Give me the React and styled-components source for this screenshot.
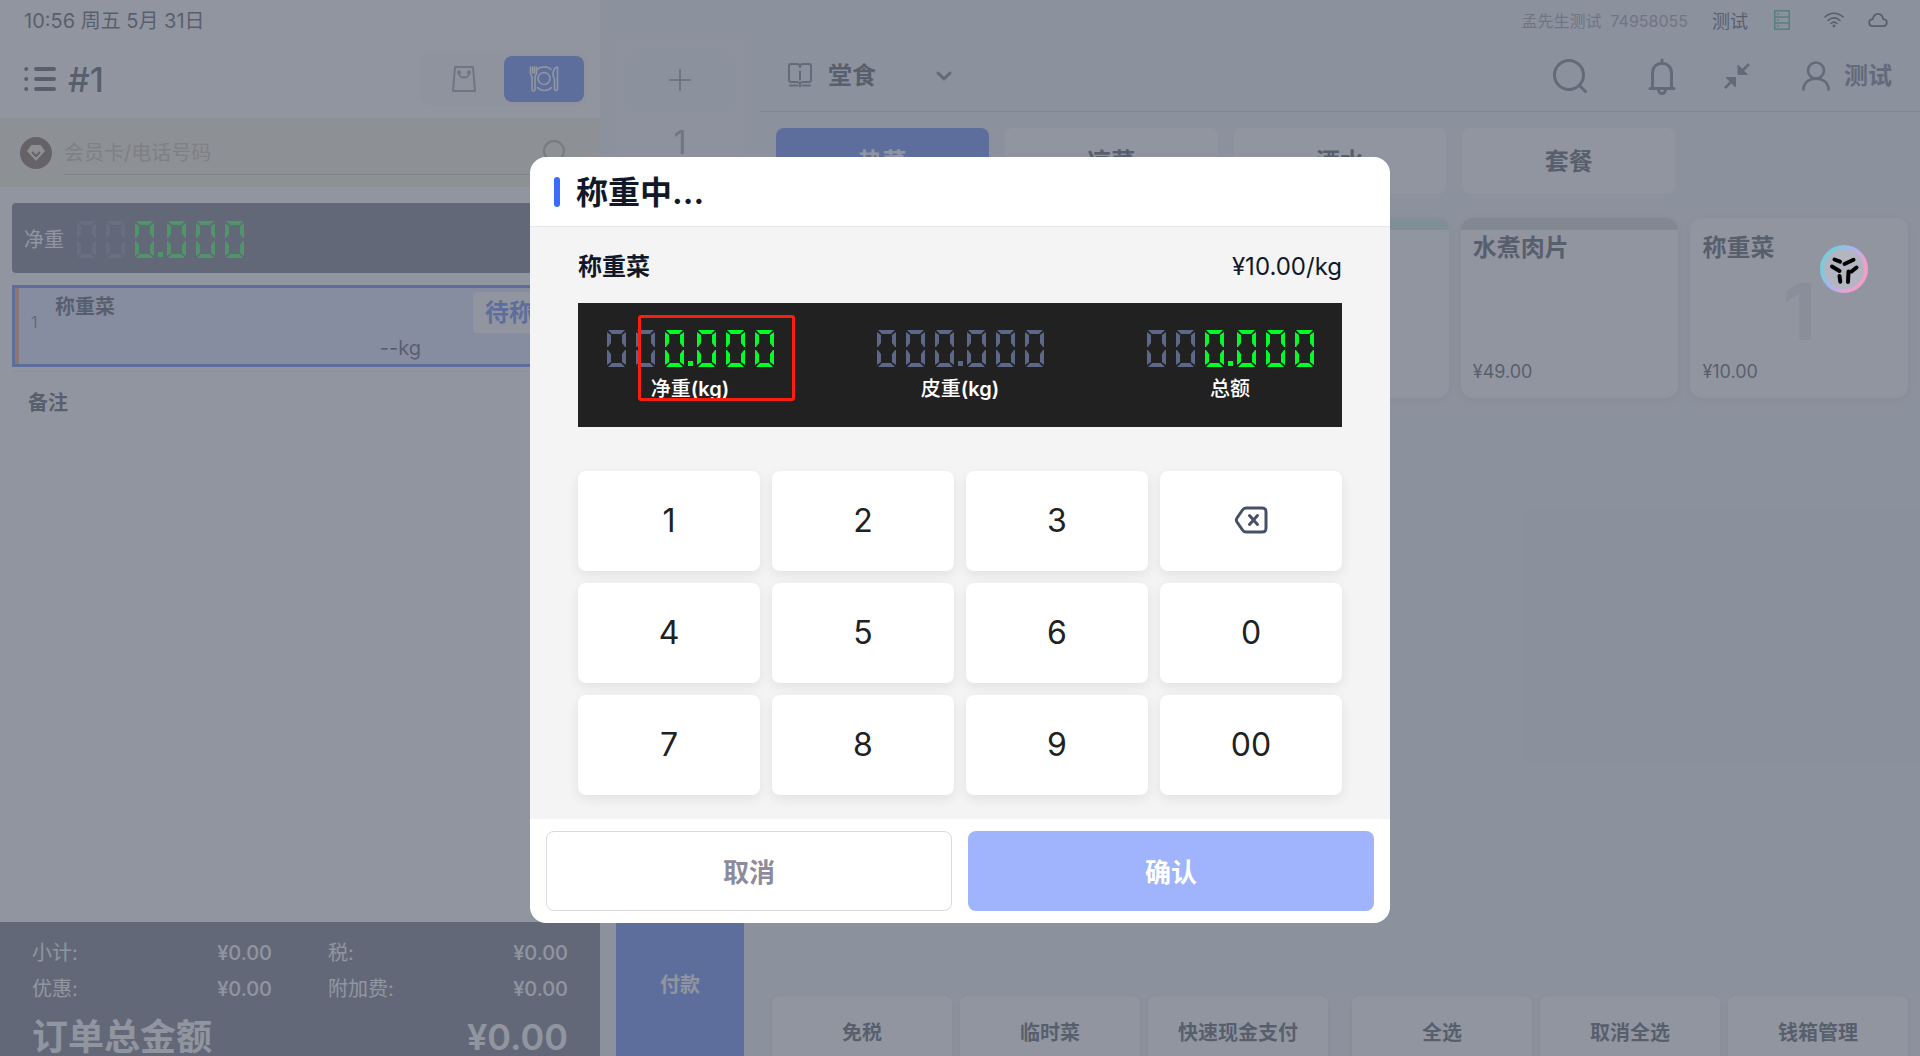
import React, { useState } from 'react';
import styled, { createGlobalStyle } from 'styled-components';

const GlobalStyle = createGlobalStyle`
  * {
    box-sizing: border-box;
  }

  body {
    margin: 0;
    overflow: hidden;
    font-family: Inter, 'Noto Sans CJK SC', sans-serif;
    color: #1f2937;
  }

  button, input, select {
    font-family: inherit;
    color: inherit;
    border: none;
    background: none;
    padding: 0;
    margin: 0;
    outline: none;
  }
`;

const Viewport = styled.div`
  height: 100vh;
  overflow: hidden;
`;

// the till screen runs a little taller than the window
const Screen = styled.div`
  position: relative;
  height: calc(100vh + 24px);
  display: grid;
  grid-template-columns: 600fr 1320fr;
  background: #ecedf1;
`;

const OrderPanel = styled.aside`
  display: flex;
  flex-direction: column;
  background: #fff;
`;

const Clock = styled.div`
  height: 40px;
  padding: 0 24px;
  font-size: 20px;
  line-height: 42px;
`;

const OrderHeader = styled.div`
  display: flex;
  align-items: center;
  gap: 12px;
  height: 78px;
  padding: 0 12px 0 24px;
`;

const OrderNumber = styled.h1`
  flex: 1;
  margin: 0;
  font-size: 34px;
  font-weight: 500;
`;

const Toggle = styled.div`
  display: flex;
  padding: 4px;
  border-radius: 12px;
  background: #f6f6f8;
`;

const ToggleButton = styled.button`
  display: flex;
  align-items: center;
  justify-content: center;
  width: 80px;
  height: 46px;
  border-radius: 8px;
  color: ${(props) => (props.$active ? '#fff' : '#7c8094')};
  background: ${(props) => (props.$active ? '#3565ee' : 'transparent')};
`;

const MemberBar = styled.div`
  display: flex;
  align-items: center;
  gap: 12px;
  height: 69px;
  padding: 0 24px 0 20px;
  background: #f2ead2;
`;

const MemberField = styled.label`
  flex: 1;
  display: flex;
  align-items: center;
  height: 44px;
  padding-right: 10px;
  border-bottom: 1px solid #cdb796;
  color: #ab9676;
`;

const MemberInput = styled.input`
  flex: 1;
  height: 42px;
  padding-top: 2px;
  font-size: 20px;

  &::placeholder {
    color: #bda98e;
    opacity: 1;
  }
`;

const OrderBody = styled.div`
  flex: 1;
  padding: 16px 12px;
`;

const WeightStrip = styled.div`
  display: flex;
  align-items: center;
  gap: 12px;
  height: 70px;
  padding: 0 12px;
  border-radius: 4px;
  background: #484e5c;
  color: #fff;
  font-size: 20px;
`;

const OrderLine = styled.div`
  display: flex;
  height: 82px;
  margin-top: 12px;
  border: 3px solid #3565ee;
  background: #d9deff;
`;

const LineMark = styled.span`
  width: 4px;
  background: #f08048;
`;

const LineIndex = styled.span`
  width: 36px;
  padding-left: 12px;
  font-size: 16px;
  line-height: 68px;
  color: #4b5563;
`;

const LineName = styled.span`
  flex: 1;
  font-size: 20px;
  font-weight: 700;
  line-height: 38px;
`;

const LineWeight = styled.span`
  align-self: flex-end;
  font-size: 20px;
  line-height: 32px;
  margin-right: 52px;
`;

const Pending = styled.span`
  height: 41px;
  margin: 4px 16px 4px 0;
  padding: 0 12px;
  border-radius: 4px;
  background: #fff;
  color: #3565ee;
  font-size: 24px;
  font-weight: 700;
  line-height: 41px;
`;

const Remark = styled.div`
  margin-top: 4px;
  padding: 0 16px;
  border-top: 1px solid #e5e7eb;
  font-size: 20px;
  font-weight: 700;
  line-height: 62px;
`;

const Summary = styled.div`
  height: 158px;
  padding: 16px 32px;
  background: #484e5c;
  color: #fff;
`;

const SummaryGrid = styled.div`
  display: grid;
  grid-template-columns: 1fr 1fr;
  gap: 6px 56px;
  font-size: 20px;
  line-height: 30px;
`;

const SummaryRow = styled.div`
  display: flex;
  justify-content: space-between;

  span:last-child {
    font-weight: 500;
  }
`;

const TotalRow = styled.div`
  display: flex;
  justify-content: space-between;
  margin-top: 14px;
  font-size: 36px;
  font-weight: 600;
  line-height: 38px;

  span:first-child {
    font-weight: 700;
  }
`;

const Workspace = styled.main`
  display: flex;
  flex-direction: column;
  min-width: 0;
`;

const StatusBar = styled.div`
  display: flex;
  align-items: center;
  justify-content: flex-end;
  height: 40px;
  padding-right: 32px;
  font-size: 18px;
`;

const ShopInfo = styled.span`
  margin-right: 24px;
  font-size: 16px;
  color: #7c8094;
  white-space: pre;
`;

const StatusIcons = styled.span`
  display: flex;
  align-items: center;
  margin-left: 26px;

  svg + svg {
    margin-left: 24px;
  }

  svg:nth-child(2) {
    margin-left: 34px;
  }
`;

const Columns = styled.div`
  flex: 1;
  display: flex;
  gap: 16px;
  min-height: 0;
  padding-left: 16px;
`;

const TicketRail = styled.nav`
  display: flex;
  flex-direction: column;
  width: 128px;
`;

const TicketList = styled.div`
  flex: 1;
  display: flex;
  flex-direction: column;
  padding: 8px;
  border-radius: 8px;
  background: #f4f4f7;
`;

const AddTicket = styled.button`
  display: flex;
  align-items: center;
  justify-content: center;
  height: 64px;
  border-radius: 8px;
  background: #ecedf1;
  color: #7c8094;
`;

const Ticket = styled.button`
  height: 60px;
  font-size: 32px;
  color: #7c8094;
`;

const PayButton = styled.button`
  height: 194px;
  background: #3565ee;
  color: #fff;
  font-size: 20px;
  font-weight: 700;
`;

const Menu = styled.div`
  flex: 1;
  display: flex;
  flex-direction: column;
  min-width: 0;
`;

const MenuHeader = styled.div`
  display: flex;
  align-items: center;
  height: 72px;
  padding: 0 28px;
  border-bottom: 1px solid #c8cad2;
`;

const ModePicker = styled.label`
  flex: 1;
  display: flex;
  align-items: center;
  gap: 16px;
  color: #4b5568;
`;

const ModeSelect = styled.select`
  appearance: none;
  width: 108px;
  margin-right: -16px;
  font-size: 24px;
  font-weight: 700;
  color: #1f2937;
`;

const IconButton = styled.button`
  display: flex;
  align-items: center;
  justify-content: center;
  gap: 14px;
  margin-left: ${(props) => props.$gap}px;
  color: #4b5568;
  font-size: 24px;
  line-height: 32px;
  font-weight: 700;
`;

const Categories = styled.div`
  display: grid;
  grid-template-columns: repeat(5, 1fr);
  gap: 16px;
  padding: 16px 16px 0;
`;

const Category = styled.button`
  height: 66px;
  padding-bottom: 4px;
  border-radius: 8px;
  font-size: 24px;
  font-weight: 700;
  background: ${(props) => (props.$active ? '#3565ee' : '#fff')};
  color: ${(props) => (props.$active ? '#fff' : '#1f2937')};
`;

const Dishes = styled.div`
  flex: 1;
  display: grid;
  grid-template-columns: repeat(5, 1fr);
  align-content: start;
  gap: 12px;
  padding: 24px 12px 0;
`;

const Dish = styled.button`
  position: relative;
  display: flex;
  flex-direction: column;
  justify-content: space-between;
  height: 180px;
  padding: ${(props) => (props.$tint ? 0 : 12)}px 12px 12px;
  overflow: hidden;
  border-radius: 12px;
  border-top: ${(props) => (props.$tint ? `12px solid ${props.$tint}` : 'none')};
  background: #fff;
  box-shadow: 0 2px 6px rgba(31, 41, 55, 0.12);
  text-align: left;
  font-size: 18px;
  line-height: 28px;
`;

const DishName = styled.span`
  font-size: 24px;
  font-weight: 700;
  line-height: 36px;
`;

const DishCount = styled.span`
  position: absolute;
  inset: 8px 0 0;
  font-size: 78px;
  font-weight: 700;
  line-height: 172px;
  text-align: center;
  color: #e0e2e8;
`;

const Actions = styled.div`
  display: flex;
  gap: 24px;
  padding: 12px;
`;

const ActionGroup = styled.div`
  flex: 1;
  display: grid;
  grid-template-columns: repeat(3, 1fr);
  gap: 8px;
`;

const Action = styled.button`
  height: 72px;
  padding-bottom: 2px;
  border-radius: 8px;
  background: #fff;
  box-shadow: 0 1px 4px rgba(31, 41, 55, 0.1);
  font-size: 20px;
  font-weight: 700;
`;

const Overlay = styled.div`
  position: absolute;
  inset: 0;
  display: flex;
  align-items: center;
  justify-content: center;
  background: rgba(107, 114, 128, 0.75);
`;

const Dialog = styled.section`
  width: 860px;
  border-radius: 16px;
  overflow: hidden;
  background: #fff;
`;

const DialogHeader = styled.header`
  display: flex;
  align-items: center;
  gap: 16px;
  height: 70px;
  padding: 0 24px;
  border-bottom: 1px solid #e5e7eb;
`;

const TitleBar = styled.span`
  width: 6px;
  height: 30px;
  border-radius: 3px;
  background: #3b6bff;
`;

const DialogTitle = styled.h2`
  margin: 0;
  padding-bottom: 4px;
  font-size: 32px;
  font-weight: 700;
  color: #111827;
`;

const DialogBody = styled.div`
  padding: 24px 48px;
  background: #f4f4f4;
`;

const DishRow = styled.div`
  display: flex;
  justify-content: space-between;
  font-size: 24px;
  line-height: 32px;
  color: #111827;

  strong {
    font-weight: 700;
  }
`;

const Scale = styled.div`
  position: relative;
  display: flex;
  justify-content: space-between;
  height: 124px;
  margin: 20px 0 44px;
  padding: 24px 28px;
  background: #212121;
`;

const Reading = styled.div`
  display: flex;
  flex-direction: column;
  align-items: center;
  gap: 8px;
  color: #fff;
  font-size: 20px;
  font-weight: 500;
  line-height: 28px;
`;

const Unit = styled.span`
  font-weight: 600;
`;

const Marker = styled.div`
  position: absolute;
  top: 12px;
  left: 60px;
  width: 157px;
  height: 86px;
  border: 3px solid #fb1d0d;
  border-radius: 3px;
`;

const Keypad = styled.div`
  display: grid;
  grid-template-columns: repeat(4, 1fr);
  gap: 12px;
`;

const Key = styled.button`
  display: flex;
  align-items: center;
  justify-content: center;
  height: 100px;
  padding-bottom: 2px;
  border-radius: 8px;
  background: #fff;
  box-shadow: 0 4px 12px rgba(0, 0, 0, 0.08);
  color: #212121;
  font-size: 32px;
  font-weight: 400;
`;

const DialogFooter = styled.footer`
  display: grid;
  grid-template-columns: 1fr 1fr;
  gap: 16px;
  padding: 12px 16px;
`;

const FooterButton = styled.button`
  height: 80px;
  padding-bottom: 2px;
  border-radius: 8px;
  border: ${(props) => (props.$primary ? 'none' : '1px solid #d9d9de')};
  background: ${(props) => (props.$primary ? '#9fb4fc' : '#fff')};
  color: ${(props) => (props.$primary ? '#fff' : '#8d8b9b')};
  font-size: 26px;
  font-weight: 700;
`;

const Assistant = styled.button`
  position: absolute;
  top: 245px;
  right: 52px;
  width: 48px;
  height: 48px;
`;

const ZERO = [
  '1,0 18,0 14,4 5,4',
  '0,2 4,5 4,13 1,17 0,17',
  '19,2 15,5 15,13 18,17 19,17',
  '0,20 1,20 4,24 4,32 0,35',
  '19,20 18,20 15,24 15,32 19,35',
  '1,37 18,37 14,33 5,33',
];

const DIGITS_X = [1, 30, 59, 91, 120, 149];

// six digit LCD read-out, the last `lit` digits are switched on
const Lcd = ({ lit, label }) => (
  <svg width="168" height="40" viewBox="0 0 168 40" role="img" aria-label={label}>
    {DIGITS_X.map((x, i) => (
      <g key={x} transform={`translate(${x} 3)`} fill={i >= 6 - lit ? '#00ff26' : '#5d6788'}>
        {ZERO.map((points) => (
          <polygon key={points} points={points} />
        ))}
      </g>
    ))}
    <rect x="82" y="34" width="5" height="5" fill={lit ? '#00ff26' : '#5d6788'} />
  </svg>
);

const Svg = ({ size = 24, w, h, box = 24, sw = 2, children }) => (
  <svg
    width={w || size}
    height={h || size}
    viewBox={`0 0 ${w ? `${w} ${h}` : `${box} ${box}`}`}
    fill="none"
    stroke="currentColor"
    strokeWidth={sw}
    strokeLinecap="round"
    strokeLinejoin="round"
    aria-hidden="true"
  >
    {children}
  </svg>
);

const ListIcon = () => (
  <Svg w={32} h={26} sw={4}>
    <path d="M12 3h18M12 13h18M12 23h18M2.2 3h.1M2.2 13h.1M2.2 23h.1" />
  </Svg>
);

const BagIcon = () => (
  <Svg w={26} h={28} sw={2}>
    <path d="M4 2h18l2 24H2z" />
    <path d="M8 8c0 6 10 6 10 0" />
    <circle cx="8" cy="7.5" r="1" />
    <circle cx="18" cy="7.5" r="1" />
  </Svg>
);

const PlateIcon = () => (
  <Svg w={30} h={28} sw={1.6}>
    <circle cx="15" cy="13.5" r="6" />
    <path d="M8.5 4.5C12 1 19 1 22 4.5M8.5 22.5c3.500 4 10.500 4 14 0" />
    <path d="M1.500 2v6.500c0 1.500 1.500 2 1.500 3.500v12.500c0 2 3 2 3 0V12c0-1.500 1.500-2 1.500-3.500V2M3.600 2v6M5.500 2v6" />
    <path d="M28 2c-3 1-4 4-4 8 0 2 1.500 3 1.500 5v9c0 2 3 2 3 0V2z" />
  </Svg>
);

const MemberBadge = () => (
  <svg width="32" height="32" viewBox="0 0 32 32" aria-hidden="true">
    <circle cx="16" cy="16" r="16" fill="#55381f" />
    <path d="M11.500 8h9l4.500 6-9 10-9-10z" fill="#f4e6c0" />
    <path d="M12 15l4 4 4-4" fill="none" stroke="#55381f" strokeWidth="2" />
  </svg>
);

const ServerIcon = () => (
  <svg width="16" height="20" viewBox="0 0 16 20" fill="none" stroke="#1fa87c" strokeWidth="1.500" aria-hidden="true">
    <path d="M.75.75h14.500v18.500H.75zM.75 7h14.500M.75 13h14.500M4 3v2M4 9v2M4 15v2" />
  </svg>
);

const WifiIcon = () => (
  <Svg w={20} h={16} sw={1.6}>
    <path d="M1 5c5-5 13-5 18 0M4 8.500c3.500-3.500 8.500-3.500 12 0M7 11.500c2-1.800 4-1.800 6 0" />
    <circle cx="10" cy="14" r=".6" />
  </Svg>
);

const CloudIcon = () => (
  <Svg w={20} h={16} sw={1.8}>
    <path d="M5 14.200C0 14 0 7.500 4.800 7.200 6 0 14 0 15.200 7.200 20 7.500 20 14 15 14.200z" />
  </Svg>
);

const BookIcon = () => (
  <Svg w={24} h={25} sw={2}>
    <path d="M12 4c0-2-1-3-3-3H3a2 2 0 0 0-2 2v14a2 2 0 0 0 2 2h7l2 1.500 2-1.500h7a2 2 0 0 0 2-2V3a2 2 0 0 0-2-2h-6c-2 0-3 1-3 3M12 8.500v8" />
    <path d="M2 22.500h7.500M14.500 22.500H22M12 21.500v2" />
  </Svg>
);

const ChevronIcon = () => (
  <Svg w={16} h={10} sw={3}>
    <path d="M2 2l6 6 6-6" />
  </Svg>
);

const SearchIcon = () => (
  <Svg w={36} h={36} sw={3}>
    <circle cx="17" cy="17" r="14.500" />
    <path d="M28 28l5.500 5.500" />
  </Svg>
);

const BellIcon = () => (
  <Svg w={28} h={38} sw={3}>
    <path d="M4.500 31V16c0-13 19-13 19 0v15M2 31.500h24M14 5V3" />
    <path d="M10.500 33c0 4.500 7 4.500 7 0" />
  </Svg>
);

const ShrinkIcon = () => (
  <svg width="26" height="26" viewBox="0 0 26 26" fill="currentColor" stroke="currentColor" aria-hidden="true">
    <path d="M14 2v9.500h9.500z M11.500 24v-9.500H2z" />
    <path d="M25 1l-7 7M1 25l7-7" strokeWidth="2.500" />
  </svg>
);

const UserIcon = () => (
  <Svg w={28} h={30} sw={2.6}>
    <circle cx="14" cy="9.500" r="8" />
    <path d="M1.500 28.500c0-14.500 25-14.500 25 0" />
  </Svg>
);

const BackspaceIcon = () => (
  <Svg w={34} h={28} sw={3}>
    <path d="M12 2h16c3 0 4 1 4 4v16c0 3-1 4-4 4H12c-1.500 0-2.500-.5-3.500-2L3 16c-1-1.500-1-2.500 0-4l5.500-8C9.500 2.500 10.500 2 12 2z" stroke="#475069" />
    <path d="M15.500 9.500l8 9M23.500 9.500l-8 9" stroke="#475069" />
  </Svg>
);

const AssistantLogo = () => (
  <svg width="48" height="48" viewBox="0 0 48 48" aria-hidden="true">
    <defs>
      <linearGradient id="ring" x1="0" y1="0.2" x2="1" y2="0.8">
        <stop offset="0.15" stopColor="#7acbdc" />
        <stop offset="0.5" stopColor="#b5b0ec" />
        <stop offset="0.8" stopColor="#f09fcd" />
      </linearGradient>
    </defs>
    <circle cx="24" cy="24" r="22" fill="#b3b6c1" stroke="url(#ring)" strokeWidth="4" />
    <path
      d="M14.500 14.500l5.500 2.200M33.500 14.800l-9 4.200M12 21.500l7.500 4.500M36.500 22.500l-5 4M19.500 31l.8 5.800M28.500 26.500l-.5 10.500"
      stroke="#000"
      strokeWidth="4"
      strokeLinecap="round"
    />
  </svg>
);

const summary = [
  ['小计:', '¥0.00'],
  ['税:', '¥0.00'],
  ['优惠:', '¥0.00'],
  ['附加费:', '¥0.00'],
];

const categories = ['热菜', '凉菜', '酒水', '套餐'];

const dishes = [
  { id: 1, tint: '#c2e4d8' },
  { id: 2, tint: '#c2e4d8' },
  { id: 3, tint: '#bfe3d2' },
  { id: 4, name: '水煮肉片', price: '¥49.00', tint: '#c2ccc5' },
  { id: 5, name: '称重菜', price: '¥10.00', count: 1 },
];

const actions = [
  ['免税', '临时菜', '快速现金支付'],
  ['全选', '取消全选', '钱箱管理'],
];

const keys = ['1', '2', '3', 'back', '4', '5', '6', '0', '7', '8', '9', '00'];

const App = () => {
  const [category, setCategory] = useState('热菜');

  return (
    <Viewport>
      <GlobalStyle />
      <Screen>
        <OrderPanel>
          <Clock>10:56 周五 5月 31日</Clock>
          <OrderHeader>
            <ListIcon />
            <OrderNumber>#1</OrderNumber>
            <Toggle>
              <ToggleButton aria-label="外带">
                <BagIcon />
              </ToggleButton>
              <ToggleButton $active aria-label="堂食">
                <PlateIcon />
              </ToggleButton>
            </Toggle>
          </OrderHeader>
          <MemberBar>
            <MemberBadge />
            <MemberField>
              <MemberInput type="text" placeholder="会员卡/电话号码" aria-label="会员卡/电话号码" />
              <Svg size={24} sw={2}>
                <circle cx="12" cy="11" r="10" />
                <path d="M19 18l4 4" />
              </Svg>
            </MemberField>
          </MemberBar>
          <OrderBody>
            <WeightStrip>
              净重
              <Lcd lit={4} label="0.000" />
            </WeightStrip>
            <OrderLine>
              <LineMark />
              <LineIndex>1</LineIndex>
              <LineName>称重菜</LineName>
              <LineWeight>--kg</LineWeight>
              <Pending>待称重</Pending>
            </OrderLine>
            <Remark>备注</Remark>
          </OrderBody>
          <Summary>
            <SummaryGrid>
              {summary.map(([label, value]) => (
                <SummaryRow key={label}>
                  <span>{label}</span>
                  <span>{value}</span>
                </SummaryRow>
              ))}
            </SummaryGrid>
            <TotalRow>
              <span>订单总金额</span>
              <span>¥0.00</span>
            </TotalRow>
          </Summary>
        </OrderPanel>

        <Workspace>
          <StatusBar>
            <ShopInfo>{'孟先生测试  74958055'}</ShopInfo>
            测试
            <StatusIcons>
              <ServerIcon />
              <WifiIcon />
              <CloudIcon />
            </StatusIcons>
          </StatusBar>
          <Columns>
            <TicketRail>
              <TicketList>
                <AddTicket aria-label="新订单">
                  <Svg size={24} sw={2}>
                    <path d="M12 2v20M2 12h20" />
                  </Svg>
                </AddTicket>
                <Ticket>1</Ticket>
              </TicketList>
              <PayButton>付款</PayButton>
            </TicketRail>
            <Menu>
              <MenuHeader>
                <ModePicker>
                  <BookIcon />
                  <ModeSelect aria-label="用餐方式">
                    <option>堂食</option>
                  </ModeSelect>
                  <ChevronIcon />
                </ModePicker>
                <IconButton aria-label="搜索">
                  <SearchIcon />
                </IconButton>
                <IconButton $gap={60} aria-label="通知">
                  <BellIcon />
                </IconButton>
                <IconButton $gap={48} aria-label="退出全屏">
                  <ShrinkIcon />
                </IconButton>
                <IconButton $gap={52}>
                  <UserIcon />
                  测试
                </IconButton>
              </MenuHeader>
              <Categories>
                {categories.map((name) => (
                  <Category key={name} $active={name === category} onClick={() => setCategory(name)}>
                    {name}
                  </Category>
                ))}
              </Categories>
              <Dishes>
                {dishes.map((dish) => (
                  <Dish key={dish.id} $tint={dish.tint}>
                    {dish.count && <DishCount>{dish.count}</DishCount>}
                    <DishName>{dish.name}</DishName>
                    {dish.price}
                  </Dish>
                ))}
              </Dishes>
              <Actions>
                {actions.map((group) => (
                  <ActionGroup key={group[0]}>
                    {group.map((name) => (
                      <Action key={name}>{name}</Action>
                    ))}
                  </ActionGroup>
                ))}
              </Actions>
            </Menu>
          </Columns>
        </Workspace>

        <Overlay>
          <Dialog role="dialog" aria-labelledby="weighing-title">
            <DialogHeader>
              <TitleBar />
              <DialogTitle id="weighing-title">称重中...</DialogTitle>
            </DialogHeader>
            <DialogBody>
              <DishRow>
                <strong>称重菜</strong>
                <span>¥10.00/kg</span>
              </DishRow>
              <Scale>
                <Reading>
                  <Lcd lit={4} label="0.000" />
                  <span>
                    净重<Unit>(kg)</Unit>
                  </span>
                </Reading>
                <Reading>
                  <Lcd lit={0} label="000.000" />
                  <span>
                    皮重<Unit>(kg)</Unit>
                  </span>
                </Reading>
                <Reading>
                  <Lcd lit={4} label="0.000" />
                  <span>总额</span>
                </Reading>
                <Marker />
              </Scale>
              <Keypad>
                {keys.map((key) => (
                  <Key key={key} aria-label={key === 'back' ? '退格' : key}>
                    {key === 'back' ? <BackspaceIcon /> : key}
                  </Key>
                ))}
              </Keypad>
            </DialogBody>
            <DialogFooter>
              <FooterButton>取消</FooterButton>
              <FooterButton $primary>确认</FooterButton>
            </DialogFooter>
          </Dialog>
        </Overlay>

        <Assistant aria-label="助手">
          <AssistantLogo />
        </Assistant>
      </Screen>
    </Viewport>
  );
};

export default App;
